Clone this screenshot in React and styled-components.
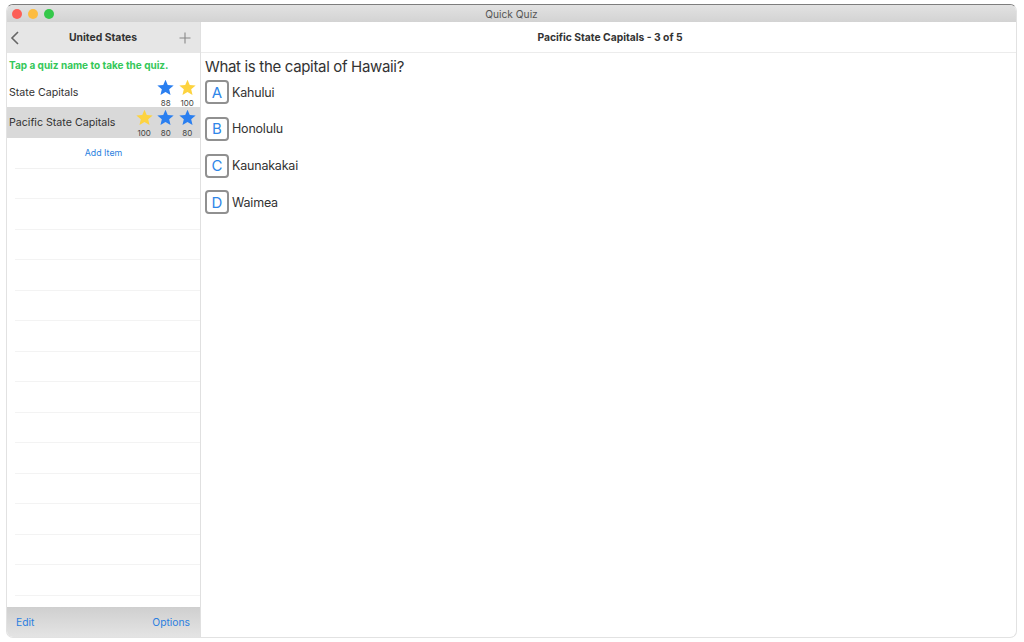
import React from 'react';
import styled, { createGlobalStyle } from 'styled-components';

const GlobalStyle = createGlobalStyle`
  html, body {
    margin: 0;
    height: 100%;
    background: #fff;
    font-family: "Inter", "Liberation Sans", sans-serif;
    overflow: hidden;
  }
`;

const Page = styled.div`
  width: 1024px;
  height: 642px;
  padding: 4px 6px 4px 6px;
  box-sizing: border-box;
  background: #fff;
`;

const Window = styled.div`
  width: 1011px;
  height: 634px;
  box-sizing: border-box;
  display: flex;
  flex-direction: column;
  border-radius: 7px;
  overflow: hidden;
  border: 1px solid #e2e2e2;
  border-top: 1px solid #7d7d7d;
`;

const TitleBar = styled.div`
  height: 17px;
  flex: none;
  display: flex;
  align-items: center;
  position: relative;
  justify-content: center;
  background: linear-gradient(#e2e2e2, #d3d3d3);
  font-size: 10.2px;
  color: #555;
`;

const Lights = styled.div`
  position: absolute;
  left: 5px;
  top: 4px;
  display: flex;
  gap: 6px;
`;

const Light = styled.span`
  width: 10px;
  height: 10px;
  border-radius: 50%;
  background: ${p => p.$color};
`;

const Body = styled.div`
  flex: 1;
  display: flex;
  min-height: 0;
`;

const Sidebar = styled.div`
  width: 193px;
  flex: none;
  display: flex;
  flex-direction: column;
  border-right: 1px solid #e0e0e0;
`;

const SideHeader = styled.div`
  height: 31px;
  flex: none;
  display: flex;
  align-items: center;
  justify-content: space-between;
  padding: 0 9px 0 3px;
  background: #e6e6e6;
  font-size: 10.4px;
  font-weight: 700;
  color: #333;
`;

const Hint = styled.div`
  height: 24px;
  flex: none;
  box-sizing: border-box;
  padding: 6px 0 0 2px;
  font-size: 10px;
  font-weight: 700;
  color: #35c759;
  white-space: nowrap;
`;

const QuizRow = styled.div`
  height: ${p => p.$height}px;
  flex: none;
  display: flex;
  align-items: center;
  justify-content: space-between;
  padding: 0 2px 0 2px;
  background: ${p => (p.$selected ? '#d9d9d9' : 'transparent')};
  font-size: 10.65px;
  color: #333;
`;

const Scores = styled.div`
  display: flex;
  align-self: flex-start;
  padding-top: 2px;
`;

const Score = styled.div`
  width: 21.5px;
  display: flex;
  flex-direction: column;
  align-items: center;
  font-size: 8px;
  line-height: 9px;
  color: #444;
`;

const ScoreValue = styled.span`
  margin-top: 3px;
`;

const AddRow = styled.div`
  height: 30.5px;
  flex: none;
  box-sizing: border-box;
  display: flex;
  align-items: center;
  justify-content: center;
  border-bottom: 1px solid #f1f1f1;
  margin-left: 8px;
  padding: 0 8px 1px 0;
  font-size: 8.8px;
  color: #2b7fe0;
`;

const EmptyRow = styled.div`
  height: 30.5px;
  flex: none;
  box-sizing: border-box;
  border-bottom: 1px solid #f3f3f3;
  margin-left: 8px;
`;

const List = styled.div`
  flex: 1;
  min-height: 0;
  overflow: hidden;
`;

const SideFooter = styled.div`
  height: 30px;
  flex: none;
  display: flex;
  align-items: center;
  justify-content: space-between;
  padding: 0 10px 0 9px;
  background: linear-gradient(#cfcfcf, #e4e4e4);
  font-size: 10.3px;
  color: #2b7fe0;
`;

const Main = styled.div`
  flex: 1;
  min-width: 0;
  display: flex;
  flex-direction: column;
`;

const MainHeader = styled.div`
  height: 31px;
  flex: none;
  box-sizing: border-box;
  display: flex;
  align-items: center;
  justify-content: center;
  padding-left: 3px;
  border-bottom: 1px solid #ececec;
  font-size: 10.3px;
  font-weight: 700;
  color: #333;
`;

const Question = styled.div`
  padding: 4px 0 0 4px;
  height: 24px;
  box-sizing: border-box;
  font-size: 15px;
  letter-spacing: -0.33px;
  line-height: 19px;
  color: #333;
  white-space: nowrap;
`;

const Answers = styled.div`
  display: flex;
  flex-direction: column;
  gap: 12.67px;
  padding: 3.3px 0 0 4px;
`;

const Answer = styled.div`
  display: flex;
  align-items: center;
  gap: 3px;
  font-size: 12.5px;
  letter-spacing: -0.2px;
  color: #333;
`;

const LetterBox = styled.div`
  width: 24px;
  height: 24px;
  box-sizing: border-box;
  display: flex;
  align-items: center;
  justify-content: center;
  border: 2px solid #909090;
  border-radius: 4px;
  font-size: 15px;
  letter-spacing: 0;
  color: #2f86e8;
`;

function Star({ color }) {
  return (
    <svg width="17" height="17" viewBox="0 0 24 24">
      <path
        fill={color}
        d="M12 1l3.2 7.4 8.3 0.7-6.3 5.4 1.9 8.1L12 18.4l-7.1 4.2 1.9-8.1L0.5 9.1l8.3-0.7z"
      />
    </svg>
  );
}

function ScoreStar({ value }) {
  const color = value === 100 ? '#fdd33f' : '#2a7ff0';
  return (
    <Score>
      <Star color={color} />
      <ScoreValue>{value}</ScoreValue>
    </Score>
  );
}

const emptyRows = Array.from({ length: 14 }, (_, i) => i);
const answers = [
  ['A', 'Kahului'],
  ['B', 'Honolulu'],
  ['C', 'Kaunakakai'],
  ['D', 'Waimea'],
];

export default function App() {
  return (
    <Page>
      <GlobalStyle />
      <Window>
        <TitleBar>
          <Lights>
            <Light $color="#fc5f57" />
            <Light $color="#fdbc40" />
            <Light $color="#34c84a" />
          </Lights>
          Quick Quiz
        </TitleBar>
        <Body>
          <Sidebar>
            <SideHeader>
              <svg width="17" height="16" viewBox="0 0 17 16">
                <path d="M8 2L2 8l6 6" fill="none" stroke="#666" strokeWidth="1.6" />
              </svg>
              United States
              <svg width="12" height="12" viewBox="0 0 12 12">
                <path d="M6 0.5v11M0.5 6h11" fill="none" stroke="#888" strokeWidth="1.1" />
              </svg>
            </SideHeader>
            <Hint>Tap a quiz name to take the quiz.</Hint>
            <QuizRow $height={30}>
              State Capitals
              <Scores>
                <ScoreStar value={88} />
                <ScoreStar value={100} />
              </Scores>
            </QuizRow>
            <QuizRow $height={31} $selected>
              Pacific State Capitals
              <Scores>
                <ScoreStar value={100} />
                <ScoreStar value={80} />
                <ScoreStar value={80} />
              </Scores>
            </QuizRow>
            <List>
              <AddRow>Add Item</AddRow>
              {emptyRows.map(i => (
                <EmptyRow key={i} />
              ))}
            </List>
            <SideFooter>
              <span>Edit</span>
              <span>Options</span>
            </SideFooter>
          </Sidebar>
          <Main>
            <MainHeader>Pacific State Capitals - 3 of 5</MainHeader>
            <Question>What is the capital of Hawaii?</Question>
            <Answers>
              {answers.map(([letter, name]) => (
                <Answer key={letter}>
                  <LetterBox>{letter}</LetterBox>
                  {name}
                </Answer>
              ))}
            </Answers>
          </Main>
        </Body>
      </Window>
    </Page>
  );
}
